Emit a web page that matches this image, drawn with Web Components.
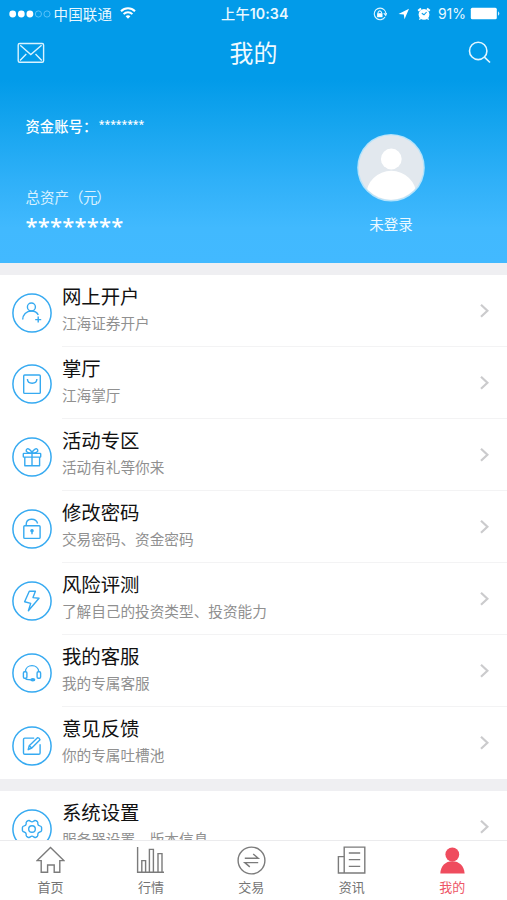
<!DOCTYPE html>
<html lang="zh-CN">
<head>
<meta charset="utf-8">
<title>我的</title>
<style>
html,body{margin:0;padding:0;height:900px;overflow:hidden;background:#fff}
body{font-family:"Liberation Sans","Noto Sans CJK SC",sans-serif}
</style>
</head>
<body>
<my-app></my-app>
<script>
const define = (name, html) => customElements.define(name, class extends HTMLElement {
  constructor() {
    super();
    this.attachShadow({ mode: 'open' });
  }
  connectedCallback() {
    const t = document.createElement('template');
    t.innerHTML = typeof html === 'function' ? html(this) : html;
    this.shadowRoot.replaceChildren(t.content.cloneNode(true));
  }
});

const rowIcons = {
  user: '<circle cx="19.4" cy="14" r="4"/><path d="M10.7 26.6C10.7 21.5 14.3 18 19.4 18C22.6 18 24.9 19.4 26.3 21.8M26.2 23.6V29.6M23.2 26.6H29.2"/>',
  bag: '<rect x="11.7" y="11" width="16.6" height="18.4" rx="1"/><path d="M15.4 15C15.6 20.6 24.7 20.6 24.9 15"/>',
  gift: '<rect x="11.3" y="16.4" width="17.4" height="3.7" rx=".6"/><path d="M12.8 20.1V28.7H27.6V20.1M20 16.4V28.7M20 16.2C16.5 16.2 13.7 15.2 14.2 13.1C14.9 10.4 19 12 20 16.2C21 12 25.1 10.4 25.8 13.1C26.3 15.2 23.5 16.2 20 16.2Z"/>',
  lock: '<rect x="11.8" y="16.8" width="16.3" height="12.6" rx="1"/><path d="M14.2 16.8V15.4C14.2 8.8 24 8.6 25.6 14.5M20 22V25.3"/><circle cx="20" cy="21.7" r="1.1" fill="#36aaf1"/>',
  bolt: '<path d="M17.3 10.3H23.4L21 16.6L27 17.3L16.4 29.8L18.7 22.4L12.6 20.8Z"/>',
  headset: '<path d="M13.3 18.8C13.8 10.6 26.2 10.6 26.8 18.8M13.2 25.2C13.6 26.5 15.5 26.7 18.8 26.7"/><rect x="11.4" y="18.8" width="3.5" height="6.4" rx="1.2"/><rect x="25.1" y="18.8" width="3.5" height="6.4" rx="1.2"/><ellipse cx="20.8" cy="26.7" rx="1.9" ry="1" fill="#36aaf1"/>',
  edit: '<path d="M22.2 12.1H12.8Q11.5 12.1 11.5 13.4V27Q11.5 28.3 12.8 28.3H26.8Q28.1 28.3 28.1 27V18.2"/><path d="M16.2 23.7L17.2 19.8L25.5 11.7Q27.2 11.4 28 13.7L19.8 22Z M17.2 19.8L19.8 22"/>',
  gear: '<path d="M16.1 11.7Q17.4 11 18.4 12.2Q20 13.5 21.6 12.2Q22.6 11 23.9 11.7L25.4 12.7Q26.1 13.4 25.8 14.8Q26 16.5 27.8 16.9Q29.4 17.1 29.6 18.6V21.3Q29.4 22.8 27.8 23Q26 23.5 25.8 25.2Q26.1 26.6 25.4 27.3L23.9 28.3Q22.6 29 21.6 27.8Q20 26.5 18.4 27.8Q17.4 29 16.1 28.3L14.6 27.3Q13.9 26.6 14.2 25.2Q14 23.5 12.2 23Q10.6 22.8 10.4 21.3V18.6Q10.6 17.1 12.2 16.9Q14 16.5 14.2 14.8Q13.9 13.4 14.6 12.7Z"/><circle cx="20" cy="20" r="3.3"/>'
};

const tabIcons = {
  home: '<path d="M1.2 14.6L14.5 1.4L27.8 14.6H23.8V26.2H18.2V19H11.6V26.2H5.2V14.6Z"/>',
  chart: '<path d="M1.6 1V26.3H28M5.8 26V14.6H9.6V26M13.4 26V3.4H17.4V26M22 26V7.6H26V26"/>',
  trade: '<circle cx="14.5" cy="14.5" r="13.4"/><path d="M7.8 12.2H21.2L16.2 8M21.2 16.6H7.8L12.8 20.9"/>',
  news: '<path d="M7.2 27V1.1H27.8V27H1.4V10.6H7.2V27M11.8 7H23.2M11.8 13.6H23.2M11.8 20.4H23.2"/>',
  me: '<circle cx="14.3" cy="8.5" r="6.9" fill="#ef4c5e" stroke="none"/><path d="M2.3 27.5C2.6 20 7.4 15.2 14.3 15.2S26.2 20 26.6 27.5Z" fill="#ef4c5e" stroke="none"/>'
};

define('status-bar', `
<style>
:host{display:flex;height:28px;align-items:center;color:#e9f8ff;font-size:14.5px;line-height:28px}
svg{display:block;flex:none}
.dots{margin-left:8.5px}
.carrier{margin:-1px 0 0 2px;font-family:"Noto Sans CJK SC",sans-serif;letter-spacing:.15px;white-space:nowrap}
.wifi{margin:-2px 0 0 8px}
.time{margin-left:85px;font:500 14.2px/28px Inter,"Noto Sans CJK SC",sans-serif;letter-spacing:.1px;white-space:nowrap}
.time b{font-weight:600}
.right{margin-left:auto;display:flex;align-items:center;padding-right:6px;margin-top:-1px}
.pct{font:400 14px/28px Inter,sans-serif;margin:0 4px 0 7px}
</style>
<svg class="dots" width="43" height="10"><g fill="#fff"><circle cx="3.7" cy="5" r="3.4"/><circle cx="12.3" cy="5" r="3.4"/><circle cx="20.9" cy="5" r="3.4"/></g><g fill="none" stroke="#62c5fb" stroke-width=".9"><circle cx="29.4" cy="5" r="3.1"/><circle cx="38" cy="5" r="3.1"/></g></svg>
<span class="carrier">中国联通</span>
<svg class="wifi" width="16" height="12" fill="none" stroke="#fff" stroke-width="2"><path d="M1 4.3C5 .3 11 .3 15 4.3M3.6 7.1C6 4.7 10 4.7 12.4 7.1"/><path d="M5.6 9.2C7 7.9 9 7.9 10.4 9.2L8 11.7Z" fill="#fff" stroke="none"/></svg>
<span class="time">上午<b>10:34</b></span>
<div class="right">
<svg width="14" height="14" fill="none" stroke="#dff4ff" stroke-width="1.1" style="margin-right:3px"><path d="M11.4 3A5.8 5.8 0 1 0 12 10M12.7 8.2A5.8 5.8 0 0 0 11.4 3M10.8 6.2L12.7 8.4L13.7 5.9"/><rect x="4.1" y="6.2" width="5.4" height="4" fill="#fff" stroke="none"/><path d="M5.1 6.6V5.2Q6.8 2.5 8.5 5.2V6.6"/></svg>
<svg width="12" height="12" style="margin-left:8px"><path d="M.5 6.1L11 .8L6.5 11.2L5.8 6.5Z" fill="#fff"/></svg>
<svg width="14" height="14" style="margin-left:7px"><circle cx="7" cy="7.4" r="5.4" fill="#fff"/><path d="M1.2 3.8L4 1.4M10 1.4L12.8 3.8" stroke="#fff" stroke-width="2"/><path d="M3.6 11.2L2.4 12.6M10.4 11.2L11.6 12.6" stroke="#fff" stroke-width="1.4"/><path d="M9.6 5L7 7.8L4.8 6.2" fill="none" stroke="#079de9" stroke-width="1.1"/></svg>
<span class="pct">91%</span>
<svg width="31" height="13"><rect x=".8" y=".8" width="26" height="11.4" rx="1.5" fill="#fff"/><path d="M28.2 4.2Q30.4 6.5 28.2 8.8Z" fill="#fff"/></svg>
</div>`);

define('nav-bar', `
<style>
:host{display:grid;grid-template-columns:60px 1fr 60px;height:52px;align-items:start}
h1{margin:0;text-align:center;color:#f0faff;font:400 24px/48px "Noto Sans CJK SC",sans-serif}
svg{display:block}
</style>
<svg width="60" height="50" fill="none" stroke="#d9f3ff" stroke-width="1.4"><rect x="18.2" y="15.5" width="25.4" height="18.8" rx="1.5"/><path d="M20.2 17.3L30.8 26.6L41.6 17.3M20 32.4L26.3 26M41.8 32.4L35.5 26"/></svg>
<h1>我的</h1>
<svg width="60" height="50" fill="none" stroke="#e4f6ff" stroke-width="1.6"><circle cx="31.2" cy="22.9" r="8.7"/><path d="M37.4 29.1L43 34.5"/></svg>`);

define('account-card', `
<style>
:host{display:flex;justify-content:space-between;height:182.6px;color:#eaf8ff;font-family:"Noto Sans CJK SC",sans-serif}
.info{padding:37px 0 0 25.5px}
.acct{display:flex;height:18px;font-size:14.3px;line-height:18px;font-weight:500;letter-spacing:.05px;color:#fff}
.acct b{font:500 10.4px/18px "Noto Sans",sans-serif;letter-spacing:-.03px;margin:-2px 0 0 1.6px}
.label{margin-top:52px;font-size:14.5px;line-height:20px;color:#d9f1ff}
.label i{font-style:normal;margin:0 -1.2px 0 -.6px}
.total{font:500 22px/28px "Noto Sans",sans-serif;letter-spacing:.2px;margin-top:4px;color:#fff}
.user{width:100px;margin-right:66px;padding-top:53px;text-align:center;font-size:14.5px;line-height:20px}
svg{display:block;margin:0 auto 11px}
</style>
<div class="info">
<div class="acct"><span>资金账号：</span><b>********</b></div>
<div class="label">总资产（<i>元</i>）</div>
<div class="total">********</div>
</div>
<div class="user">
<svg width="70" height="70"><defs><clipPath id="c"><circle cx="35" cy="34.7" r="32"/></clipPath></defs><circle cx="35" cy="34.7" r="33.8" fill="#b5e3fb"/><circle cx="35" cy="34.7" r="32.4" fill="#e2e8ee"/><circle cx="35.3" cy="26" r="10.4" fill="#fff"/><ellipse cx="35.3" cy="62" rx="25" ry="24.2" fill="#fff" clip-path="url(#c)"/></svg>
未登录
</div>`);

define('menu-row', el => `
<style>
:host{display:flex;height:72px;background:#fff;box-sizing:border-box}
.icon{display:block;flex:none;margin:calc(var(--cy,38px) - 20px) 9.7px 0 12.2px}
.body{flex:1;display:flex;justify-content:space-between;border-bottom:1.5px solid #f3f3f4;box-sizing:border-box}
:host([last]) .body{border-color:transparent}
.title{font:400 19.4px/28px "Noto Sans CJK SC",sans-serif;color:#111;margin-top:7px;white-space:nowrap}
.sub{font:400 14.65px/20px "Noto Sans CJK SC",sans-serif;color:#909090;margin-top:3px;white-space:nowrap}
.chev{display:block;margin:28px 16.3px 0 0}
</style>
<svg class="icon" width="40" height="40" fill="none" stroke="#36aaf1" stroke-width="1.4" stroke-linejoin="round"><circle cx="20" cy="20" r="19.1" stroke-width="1.5"/>${rowIcons[el.getAttribute('icon')]}</svg>
<div class="body">
<div><div class="title"><slot></slot></div><div class="sub"><slot name="sub"></slot></div></div>
<svg class="chev" width="12" height="16" fill="none" stroke="#cbcbcd" stroke-width="2.2"><path d="M2 1.8L8.4 7.8L2 13.8"/></svg>
</div>`);

define('menu-group', `
<style>:host{display:block;background:#fff;margin-top:12.3px}</style><slot></slot>`);

define('tab-item', el => `
<style>
:host{display:flex;flex-direction:column;align-items:center;color:#747474;font:400 13px/18px "Noto Sans CJK SC",sans-serif}
:host([active]){color:#ee5666}
svg{display:block;margin:4.6px 0 3.8px}
</style>
<svg width="29" height="29" fill="none" stroke="#7b7b7b" stroke-width="1.4">${tabIcons[el.getAttribute('icon')]}</svg>
<slot></slot>`);

define('tab-bar', `
<style>
:host{display:grid;grid-template-columns:repeat(5,100.4px);padding-left:.4px;height:60px;flex:none;background:#fff;border-top:1px solid #ebebed;box-sizing:border-box}
</style><slot></slot>`);

const item = (icon, cy, title, sub, last = '') =>
  `<menu-row icon="${icon}" style="--cy:${cy}px" ${last}>${title}<span slot="sub">${sub}</span></menu-row>`;

define('my-app', `
<style>
:host{display:flex;flex-direction:column;width:507px;height:900px;overflow:hidden;background:#efeff2}
header{flex:none;background:linear-gradient(#029be9 0,#029be9 80px,#16a5ef 125px,#2fb0f8 180px,#41b9fe 228px,#42b9ff 100%)}
main{flex:1;min-height:0;overflow:hidden}
</style>
<header><status-bar></status-bar><nav-bar></nav-bar><account-card></account-card></header>
<main>
<menu-group>
${item('user', 38.5, '网上开户', '江海证券开户')}
${item('bag', 37, '掌厅', '江海掌厅')}
${item('gift', 38.5, '活动专区', '活动有礼等你来')}
${item('lock', 38.5, '修改密码', '交易密码、资金密码')}
${item('bolt', 38, '风险评测', '了解自己的投资类型、投资能力')}
${item('headset', 38, '我的客服', '我的专属客服')}
${item('edit', 39, '意见反馈', '你的专属吐槽池', 'last')}
</menu-group>
<menu-group>
${item('gear', 38, '系统设置', '服务器设置、版本信息', 'last')}
</menu-group>
</main>
<tab-bar>
<tab-item icon="home">首页</tab-item>
<tab-item icon="chart">行情</tab-item>
<tab-item icon="trade">交易</tab-item>
<tab-item icon="news">资讯</tab-item>
<tab-item icon="me" active>我的</tab-item>
</tab-bar>`);
</script>
</body>
</html>
